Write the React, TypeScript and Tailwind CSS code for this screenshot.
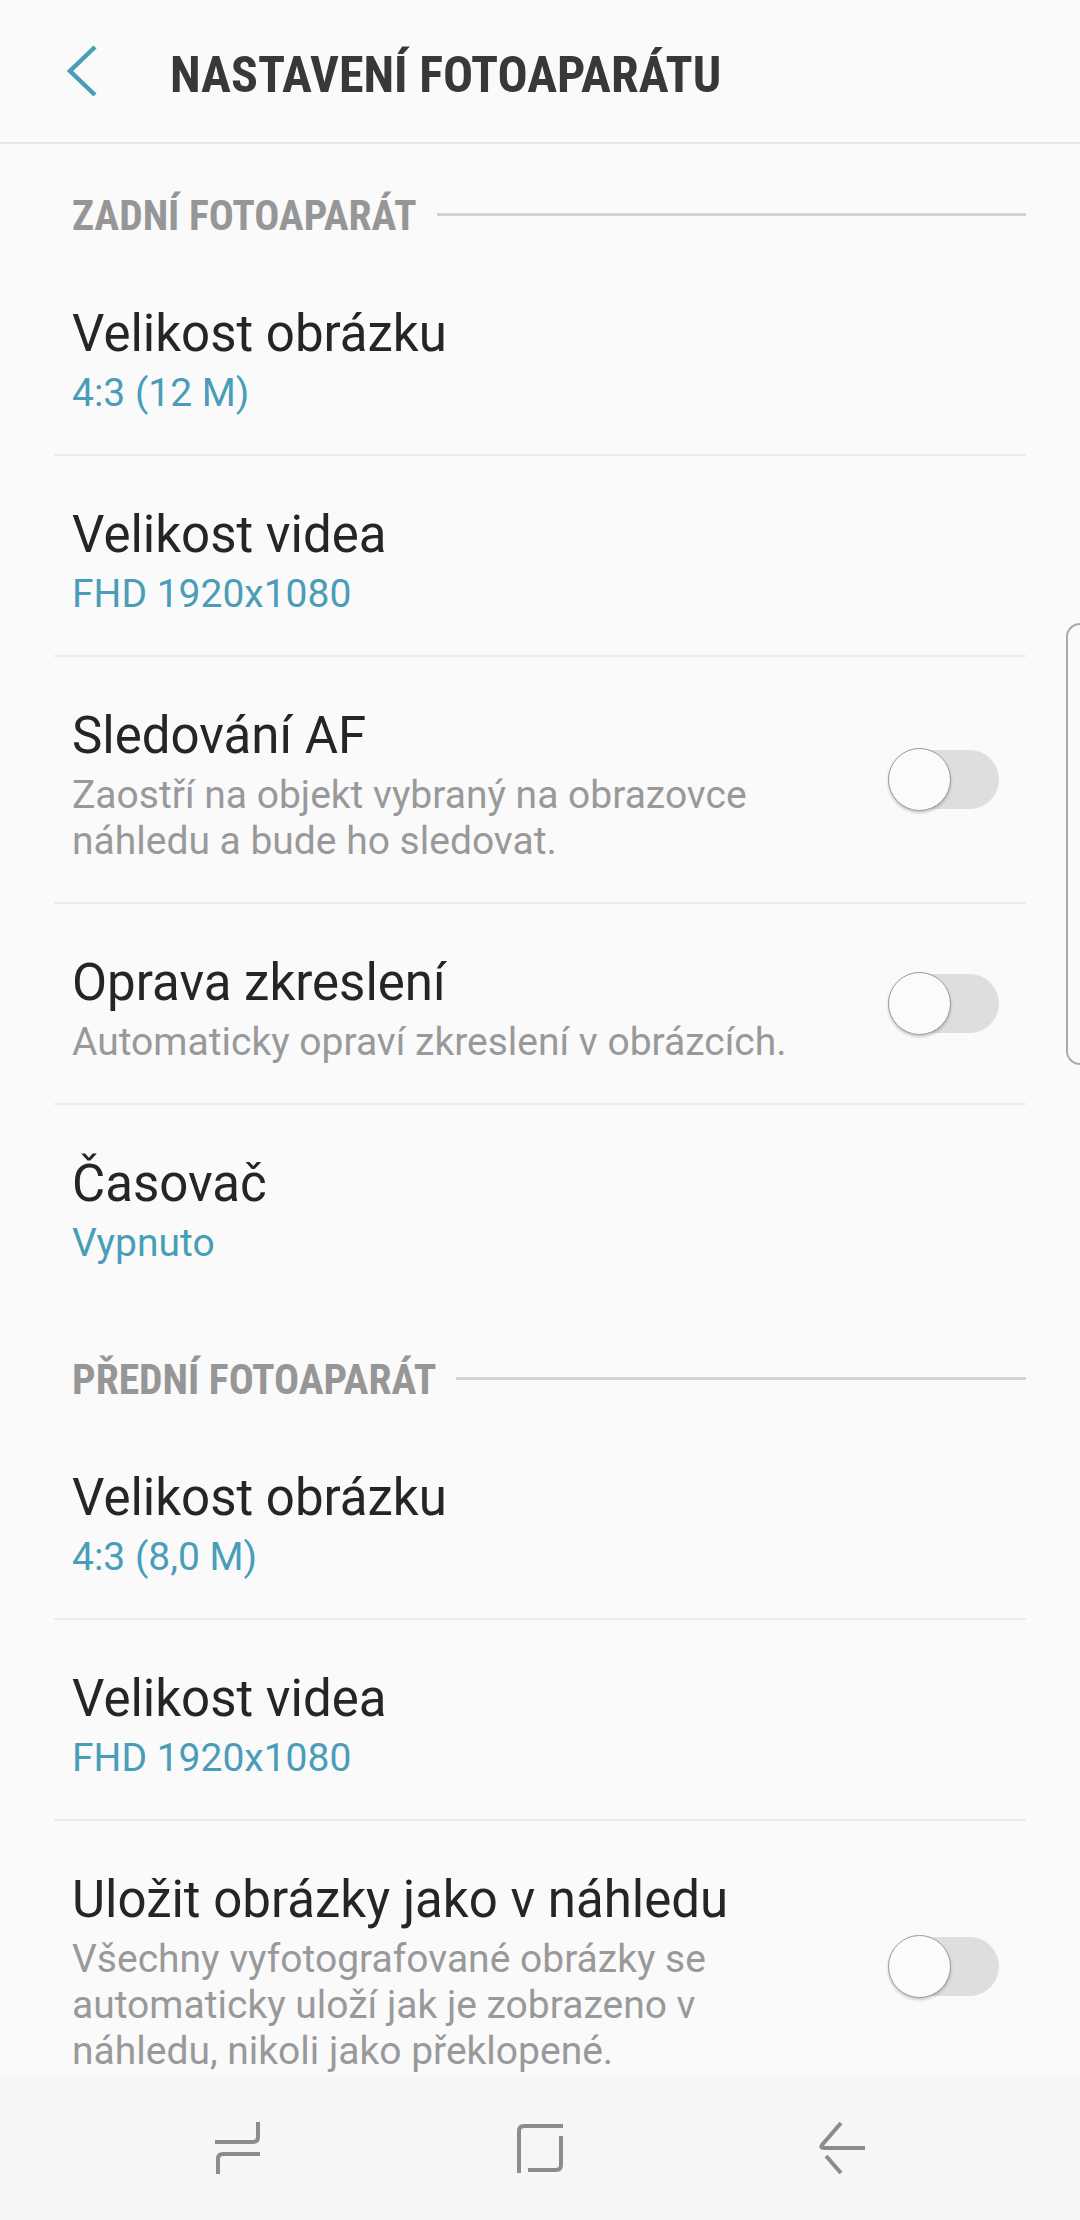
const FONT = "font-['Roboto',sans-serif]"

function Toggle() {
  return (
    <div className="relative w-[111px] h-[63px] shrink-0 flex items-center">
      <div className="w-[109px] h-[59px] ml-[2px] rounded-full bg-[#dedede]" />
      <div className="absolute left-0 top-0 w-[63px] h-[63px] rounded-full bg-[#fbfbfb] border border-[#9a9a9a] shadow-[0_2px_3px_rgba(0,0,0,0.2)]" />
    </div>
  )
}

function SectionHeader({ label }: { label: string }) {
  return (
    <div className="h-[111px] pt-[29px] pl-[72px] pr-[54px]">
      <div className="h-[82px] flex items-center gap-[20px]">
        <span className="pt-[5px] text-[41.6px] font-bold text-[#969696] [font-stretch:condensed] whitespace-nowrap">{label}</span>
        <div className="flex-1 h-[3px] bg-[#d2d2d2]" />
      </div>
    </div>
  )
}

function Row({ title, value, desc, toggle, last }: { title: string; value?: string; desc?: string[]; toggle?: boolean; last?: boolean }) {
  return (
    <div className={`mx-[54px] pl-[18px] pr-[27px] flex items-center justify-between border-b-2 ${last ? "border-transparent" : "border-[#ececec]"}`}>
      <div className="pt-[43px] pb-[38px]">
        <div className="text-[51px] leading-[72px] text-[#252525] whitespace-nowrap">{title}</div>
        {value && <div className="text-[39px] leading-[46px] text-[#4a9db8]">{value}</div>}
        {desc && desc.map((line) => (
          <div key={line} className="text-[39px] leading-[46px] text-[#999999] whitespace-nowrap">{line}</div>
        ))}
      </div>
      {toggle && <Toggle />}
    </div>
  )
}

export default function App() {
  return (
    <div className={`relative w-[1080px] h-[2220px] overflow-hidden bg-[#fafafa] ${FONT}`}>
      <div className="h-[144px] border-b-2 border-[#e6e6e6] flex items-center pl-[66px] gap-[72px]">
        <svg width="32" height="52" viewBox="0 0 32 52" fill="none" stroke="#4a9db8" strokeWidth="4.500">
          <path d="M29 2L4 26L29 50" />
        </svg>
        <h1 className="pt-[8px] text-[50px] font-bold text-[#383838] [font-stretch:condensed] whitespace-nowrap">NASTAVENÍ FOTOAPARÁTU</h1>
      </div>

      <SectionHeader label="ZADNÍ FOTOAPARÁT" />
      <Row title="Velikost obrázku" value="4:3 (12 M)" />
      <Row title="Velikost videa" value="FHD 1920x1080" />
      <Row title="Sledování AF" desc={["Zaostří na objekt vybraný na obrazovce", "náhledu a bude ho sledovat."]} toggle />
      <Row title="Oprava zkreslení" desc={["Automaticky opraví zkreslení v obrázcích."]} toggle />
      <Row title="Časovač" value="Vypnuto" last />

      <div className="mt-[2px]">
        <SectionHeader label="PŘEDNÍ FOTOAPARÁT" />
      </div>
      <Row title="Velikost obrázku" value="4:3 (8,0 M)" />
      <Row title="Velikost videa" value="FHD 1920x1080" />
      <Row title="Uložit obrázky jako v náhledu" desc={["Všechny vyfotografované obrázky se", "automaticky uloží jak je zobrazeno v", "náhledu, nikoli jako překlopené."]} toggle last />

      {/* edge panel handle */}
      <div className="absolute right-0 top-[623px] w-[14px] h-[442px] rounded-l-[20px] border-2 border-r-0 border-[#ababab] bg-[#fafafa]" />

      {/* system nav bar */}
      <div className="absolute left-0 right-0 bottom-0 h-[145px] bg-[#f6f6f6] px-[215px] flex items-center justify-between">
        <svg width="45" height="52" viewBox="0 0 45 52" fill="none" stroke="#8c8c8c" strokeWidth="4">
          <path d="M43 0V15Q43 20 38 20H0" />
          <path d="M45 32H8Q3 32 3 37V52" />
        </svg>
        <svg width="47" height="50" viewBox="0 0 47 50" fill="none" stroke="#8c8c8c" strokeWidth="4">
          <path d="M3 50V8Q3 3 8 3H47" />
          <path d="M45 13V42Q45 47 40 47H12" />
        </svg>
        <svg width="46" height="52" viewBox="0 0 46 52" fill="none" stroke="#8c8c8c" strokeWidth="4">
          <path d="M22 1L3 23Q1 26 5 26H46" />
          <path d="M7 34L22 51" />
        </svg>
      </div>
    </div>
  )
}
